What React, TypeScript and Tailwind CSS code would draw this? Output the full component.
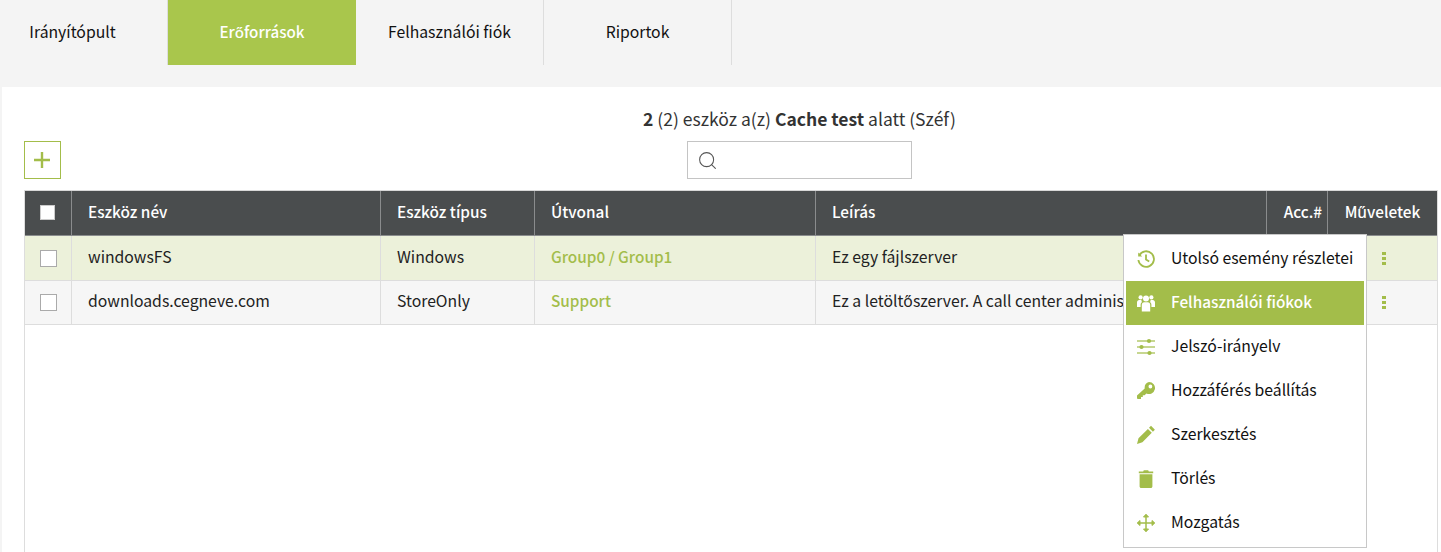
import React from 'react';
import { Search } from 'lucide-react';

const font = "font-['Noto_Sans_CJK_SC','Source_Sans_Pro','Noto_Sans',sans-serif]";

const HistoryIcon = () => (
  <svg viewBox="0 0 20 20" className="w-[20px] h-[20px]" fill="none" stroke="#a3bd4a" strokeWidth="1.8">
    <path d="M3.2 6.5A7.8 7.8 0 1 1 2.4 11" />
    <path d="M2.2 3.4v4h4" fill="#a3bd4a" stroke="none" />
    <path d="M10 5.5v5l3.2 2" />
  </svg>
);

const UsersIcon = ({ color }: { color: string }) => (
  <svg viewBox="0 0 20 20" className="w-[20px] h-[20px]" fill={color}>
    <circle cx="10" cy="5.6" r="3" />
    <circle cx="4.6" cy="4.4" r="2.1" />
    <circle cx="15.4" cy="4.4" r="2.1" />
    <path d="M5.8 18.5v-6.6c0-1.6 1.1-2.7 2.4-2.7h3.6c1.3 0 2.4 1.1 2.4 2.7v6.6z" />
    <path d="M1 14V9.6C1 8 2 7 3.2 7h2.2c-.1.9.2 1.6.7 2.1-1 .6-1.5 1.6-1.5 2.8V14z" />
    <path d="M19 14V9.6C19 8 18 7 16.8 7h-2.2c.1.9-.2 1.6-.7 2.1 1 .6 1.5 1.6 1.5 2.8V14z" />
  </svg>
);

const SlidersIcon = () => (
  <svg viewBox="0 0 20 20" className="w-[20px] h-[20px]" fill="#a3bd4a">
    <rect x="1" y="3.4" width="18" height="1.2" />
    <rect x="1" y="9.4" width="18" height="1.2" />
    <rect x="1" y="15.4" width="18" height="1.2" />
    <circle cx="13" cy="4" r="2.1" />
    <circle cx="5.5" cy="10" r="2.1" />
    <circle cx="13.5" cy="16" r="2.1" />
  </svg>
);

const KeyIcon = () => (
  <svg viewBox="0 0 20 20" className="w-[20px] h-[20px]">
    <path fill="#a3bd4a" fillRule="evenodd" d="M13 1a6 6 0 1 1-2.6 11.4L8.6 14.2H6.8V16H5v1.9H1.6L1 17.3v-2.7l7.7-7.2A6 6 0 0 1 13 1zm1.4 2.6a1.9 1.9 0 1 0 0 3.8 1.9 1.9 0 0 0 0-3.8z" />
  </svg>
);

const PencilIcon = () => (
  <svg viewBox="0 0 20 20" className="w-[20px] h-[20px]" fill="#a3bd4a">
    <path d="M15 .8l3.9 3.9-2 2L13 2.8zM11.9 3.9l3.9 3.9-9.4 9.4L1 19l1.5-5.7z" />
  </svg>
);

const TrashIcon = () => (
  <svg viewBox="0 0 20 20" className="w-[20px] h-[20px]" fill="#a3bd4a">
    <path d="M7.8 1.2h4.4l.6 1.3h4.4v1.7H2.8V2.5h4.400z" />
    <path d="M3.6 5.2h12.8v12.4c0 .8-.7 1.500-1.500 1.500H5.100c-.8 0-1.500-.7-1.500-1.500z" />
  </svg>
);

const MoveIcon = () => (
  <svg viewBox="0 0 20 20" className="w-[20px] h-[20px]" fill="none" stroke="#a3bd4a" strokeWidth="1.5">
    <path d="M10 2v16M2 10h16" />
    <path d="M7.5 4L10 1.2 12.5 4zM7.5 16l2.5 2.8 2.5-2.8zM4 7.5L1.2 10 4 12.5zM16 7.5l2.8 2.5-2.8 2.5z" fill="#a3bd4a" strokeWidth="1" />
  </svg>
);

const Dots = () => (
  <div className="flex flex-col items-center gap-[2px]">
    <span className="w-[4px] h-[3px] bg-[#a3bd4a]" />
    <span className="w-[4px] h-[3px] bg-[#a3bd4a]" />
    <span className="w-[4px] h-[3px] bg-[#a3bd4a]" />
  </div>
);

const tabs = [
  { label: 'Irányítópult', width: 'w-[168px] pr-[22px]', active: false },
  { label: 'Erőforrások', width: 'w-[188px]', active: true },
  { label: 'Felhasználói fiók', width: 'w-[188px]', active: false },
  { label: 'Riportok', width: 'w-[188px]', active: false },
];

const menu = [
  { label: 'Utolsó esemény részletei', icon: <HistoryIcon /> },
  { label: 'Felhasználói fiókok', icon: <UsersIcon color="#ffffff" />, active: true },
  { label: 'Jelszó-irányelv', icon: <SlidersIcon /> },
  { label: 'Hozzáférés beállítás', icon: <KeyIcon /> },
  { label: 'Szerkesztés', icon: <PencilIcon /> },
  { label: 'Törlés', icon: <TrashIcon /> },
  { label: 'Mozgatás', icon: <MoveIcon /> },
];

const rows = [
  { name: 'windowsFS', type: 'Windows', path: 'Group0 / Group1', desc: 'Ez egy fájlszerver', bg: 'bg-[#ecf1da] h-[45px]' },
  { name: 'downloads.cegneve.com', type: 'StoreOnly', path: 'Support', desc: 'Ez a letöltőszerver. A call center adminisztrátorai használják', bg: 'bg-[#f6f6f6] h-[44px]' },
];

export default function App() {
  return (
    <div className={`${font} w-[1441px] h-[552px] overflow-hidden bg-[#f4f4f4] text-[15.75px] text-[#222]`}>
      {/* Top tabs */}
      <div className="flex h-[87px] items-start">
        {tabs.map((tab) => (
          <div
            key={tab.label}
            className={`h-[65px] flex items-center justify-center pb-[2px] ${tab.width} ${
              tab.active ? 'bg-[#a9c64c] text-white font-medium text-[15.2px]' : 'border-r border-[#dddddd] text-[#111]'
            }`}
          >
            {tab.label}
          </div>
        ))}
      </div>

      <div className="relative ml-[2px] h-[465px] bg-white">
        <div className="pt-[20px] pl-[156px] text-center text-[17.5px] leading-[24px] text-[#333]">
          <b className="font-bold">2</b> (2) eszköz a(z) <b className="font-bold">Cache test</b> alatt (Széf)
        </div>

        <div className="h-[38px] mt-[10px] flex">
          <button className="ml-[22px] w-[37px] h-[38px] border border-[#a3bd4a] flex items-center justify-center pr-[2px]">
            <svg viewBox="0 0 16 16" className="w-[16px] h-[16px]" stroke="#a3bd4a" strokeWidth="2.4">
              <path d="M8 0v16M0 8h16" />
            </svg>
          </button>
          <div className="ml-[626px] w-[225px] h-[38px] border border-[#c4c4c4] flex items-center pl-[9px]">
            <Search className="w-[21px] h-[21px] text-[#555]" strokeWidth={1.2} />
          </div>
        </div>

        {/* Table */}
        <div className="ml-[22px] mt-[11px] w-[1414px] h-[400px] border-l border-r border-[#dddddd]">
          <div className="flex h-[46px] bg-[#4a4d4e] text-white font-medium text-[15.35px] border-t border-b border-t-[#d8d8d8] border-b-[#8a8c8d]">
            <div className="w-[47px] flex items-center justify-center pr-[2px] pb-[1px] border-r border-[#8a8c8d]">
              <span className="w-[15px] h-[15px] bg-white border border-[#cccccc]" />
            </div>
            <div className="w-[309px] flex items-center pl-[16px] pb-[2px] border-r border-[#8a8c8d]">Eszköz név</div>
            <div className="w-[154px] flex items-center pl-[16px] pb-[2px] border-r border-[#8a8c8d]">Eszköz típus</div>
            <div className="w-[281px] flex items-center pl-[16px] pb-[2px] border-r border-[#8a8c8d]">Útvonal</div>
            <div className="w-[451px] flex items-center pl-[16px] pb-[2px] border-r border-[#8a8c8d]">Leírás</div>
            <div className="w-[61px] flex items-center justify-end pr-[5px] pb-[2px] border-r border-[#8a8c8d]">Acc.#</div>
            <div className="flex-1 flex items-center justify-center pb-[2px]">Műveletek</div>
          </div>
          {rows.map((row) => (
            <div key={row.name} className={`flex border-b border-[#dddddd] ${row.bg}`}>
              <div className="w-[47px] flex items-center justify-center border-r border-[#dddddd]">
                <span className="w-[17px] h-[17px] bg-white border border-[#aaaaaa]" />
              </div>
              <div className="w-[309px] flex items-center pl-[16px] pb-[3px] border-r border-[#dddddd]">{row.name}</div>
              <div className="w-[154px] flex items-center pl-[16px] pb-[3px] border-r border-[#dddddd]">{row.type}</div>
              <div className="w-[281px] flex items-center pl-[16px] pb-[3px] border-r border-[#dddddd] font-medium text-[15.35px] text-[#a3bd4a]">{row.path}</div>
              <div className="flex-1 flex items-center pl-[16px] pb-[3px] whitespace-nowrap overflow-hidden">{row.desc}</div>
              <div className="w-[110px] flex items-center justify-center pl-[3px]">
                <Dots />
              </div>
            </div>
          ))}
        </div>

        {/* Actions menu */}
        <div className="absolute left-[1121px] top-[147px] w-[244px] h-[314px] bg-white border border-[#c8c8c8] pt-[2px] px-[2px]">
          {menu.map((item) => (
            <div
              key={item.label}
              className={`flex items-center h-[44px] pl-[10px] ${item.active ? 'bg-[#a3bd4a] text-white font-medium text-[15.35px]' : 'text-[#111]'}`}
            >
              <span className="w-[20px] flex justify-center mr-[15px]">{item.icon}</span>
              <span className="pb-[3px]">{item.label}</span>
            </div>
          ))}
        </div>
      </div>
    </div>
  );
}
